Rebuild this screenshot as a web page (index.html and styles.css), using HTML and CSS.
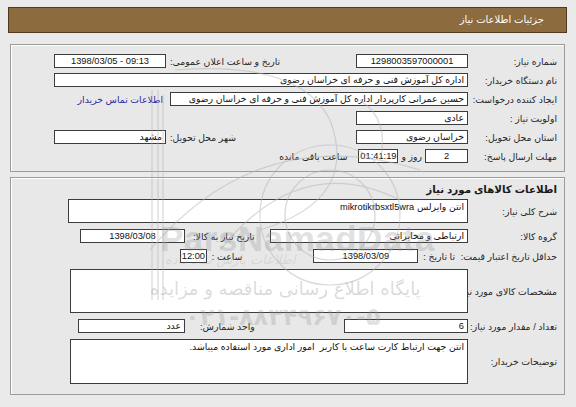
FILE: index.html
```html
<!DOCTYPE html>
<html lang="fa" dir="rtl">
<head>
<meta charset="utf-8">
<title>جزئیات اطلاعات نیاز</title>
<link rel="stylesheet" href="styles.css">
</head>
<body>
<div class="page">
  <div class="header">جزئیات اطلاعات نیاز</div>

  <div class="panel p1">
    <div class="row">
      <div class="lbl">شماره نیاز:</div>
      <div class="box c" style="width:112px">1298003597000001</div>
      <div class="grp">
        <div class="txt">تاریخ و ساعت اعلان عمومی:</div>
        <div class="box c" style="width:112px">1398/03/05 - 09:13</div>
      </div>
    </div>
    <div class="row">
      <div class="lbl">نام دستگاه خریدار:</div>
      <div class="box" style="width:414px">اداره کل آموزش فنی و حرفه ای خراسان رضوی</div>
    </div>
    <div class="row">
      <div class="lbl">ایجاد کننده درخواست:</div>
      <div class="box" style="width:298px">حسین عمرانی کارپردار اداره کل آموزش فنی و حرفه ای خراسان رضوی</div>
      <a class="link" href="#">اطلاعات تماس خریدار</a>
    </div>
    <div class="row">
      <div class="lbl">اولویت نیاز :</div>
      <div class="box" style="width:112px">عادی</div>
    </div>
    <div class="row">
      <div class="lbl">استان محل تحویل:</div>
      <div class="box" style="width:112px">خراسان رضوی</div>
      <div class="grp">
        <div class="txt">شهر محل تحویل:</div>
        <div class="box" style="width:112px">مشهد</div>
      </div>
    </div>
    <div class="row">
      <div class="lbl">مهلت ارسال پاسخ:</div>
      <div class="box c" style="width:43px">2</div>
      <div class="txt gap3">روز و</div>
      <div class="box c gap3" style="width:40px">01:41:19</div>
      <div class="txt gap11">ساعت باقی مانده</div>
    </div>
  </div>

  <div class="panel p2">
    <div class="title">اطلاعات کالاهای مورد نیاز</div>
    <div class="row tall24">
      <div class="lbl">شرح کلی نیاز:</div>
      <div class="box multi" style="width:400px">انتن وایرلس mikrotikrbsxtl5wra</div>
    </div>
    <div class="row">
      <div class="lbl">گروه کالا:</div>
      <div class="box" style="width:198px">ارتباطی و مخابراتی</div>
      <div class="grp ml12">
        <div class="txt">تاریخ نیاز به کالا:</div>
        <div class="box c gap8" style="width:105px">1398/03/08</div>
      </div>
    </div>
    <div class="row">
      <div class="lbl">حداقل تاریخ اعتبار قیمت:</div>
      <div class="txt gap13">تا تاریخ :</div>
      <div class="box c gap5" style="width:105px">1398/03/09</div>
      <div class="txt gap71">ساعت :</div>
      <div class="box c gap5" style="width:27px">12:00</div>
    </div>
    <div class="row tall44">
      <div class="lbl">مشخصات کالای مورد نیاز:</div>
      <div class="box multi" style="width:398px"></div>
    </div>
    <div class="row">
      <div class="lbl">تعداد / مقدار مورد نیاز:</div>
      <div class="box" style="width:124px">6</div>
      <div class="grp ml10">
        <div class="txt">واحد شمارش:</div>
        <div class="box gap15" style="width:107px">عدد</div>
      </div>
    </div>
    <div class="row tall45">
      <div class="lbl">توضیحات خریدار:</div>
      <div class="box multi" style="width:398px">انتن جهت ارتباط کارت ساعت با کاربر&nbsp; امور اداری مورد استفاده میباشد.</div>
    </div>
  </div>

  <div class="watermark" aria-hidden="true">
    <svg class="wm-logo" width="576" height="407" viewBox="0 0 576 407">
      <g fill="none" stroke="#b4b4b4" stroke-width="1.2" opacity="0.5">
        <path d="M152 90 V300"/><path d="M158 90 V300"/>
        <path d="M163 95 V300"/>
        <path d="M175 70 Q300 60 330 120 Q360 200 260 230"/>
        <path d="M220 250 Q300 150 400 200"/>
        <path d="M150 250 Q260 120 420 170"/>
        <circle cx="330" cy="215" r="45"/>
        <circle cx="330" cy="215" r="70"/>
        <path d="M360 100 Q390 120 380 160"/>
      </g>
    </svg>
    <div class="wm-en">ParsNamadData</div>
    <div class="wm-small">اطلاعات پارس نماد داده</div>
    <div class="wm-fa">پایگاه اطلاع رسانی مناقصه و مزایده</div>
    <div class="wm-num">۰۲۱-۸۸۳۴۹۶۷۰-۵</div>
  </div>
</div>
</body>
</html>
```

FILE: styles.css
```css
html, body {
  margin: 0;
  padding: 0;
  background: #eaeaea;
}
body {
  font-family: "Liberation Sans", "DejaVu Sans", sans-serif;
  font-size: 9.3px;
  color: #1a1a1a;
}
.page {
  position: relative;
  width: 576px;
  height: 407px;
  box-sizing: border-box;
  padding: 7px 9px 0 8px;
  overflow: hidden;
}
.header {
  height: 26px;
  box-sizing: border-box;
  background: #8c6b3e;
  border: 1px solid #4e3b22;
  color: #ffffff;
  font-size: 10px;
  line-height: 24px;
  padding-right: 22px;
}
.panel {
  margin: 11px 2px 0 2px;
  border: 1px solid #9b9b9b;
  box-shadow: inset 1px 1px 0 #ffffff;
  background: #e8e8e8;
  display: flex;
  flex-direction: column;
}
.p1 {
  padding: 9px 7px 8px 43px;
  gap: 5px;
}
.p2 {
  margin-top: 5px;
  padding: 4px 7px 10px 57px;
  gap: 6px;
}
.row {
  display: flex;
  align-items: center;
  height: 14px;
}
.tall24 { height: 24px; }
.tall44 { height: 44px; }
.tall45 { height: 45px; }
.lbl {
  width: 89px;
  flex: none;
  white-space: nowrap;
  color: #262626;
}
.txt {
  white-space: nowrap;
  flex: none;
  color: #262626;
}
.box {
  height: 14px;
  box-sizing: border-box;
  flex: none;
  background: #ffffff;
  border: 1px solid #3c3c3c;
  line-height: 12px;
  padding: 0 3px;
  white-space: nowrap;
  overflow: hidden;
  color: #111;
}
.box.c {
  text-align: center;
  direction: ltr;
  padding: 0;
}
.box.multi {
  height: 100%;
  white-space: normal;
  padding-top: 1px;
}
.grp {
  margin-right: auto;
  display: flex;
  align-items: center;
  gap: 4px;
}
.ml12 { margin-left: 12px; gap: 0; }
.ml10 { margin-left: 10px; gap: 0; }
.gap3 { margin-right: 3px; }
.gap5 { margin-right: 5px; }
.gap8 { margin-right: 8px; }
.gap11 { margin-right: 11px; }
.gap13 { margin-right: 13px; }
.gap15 { margin-right: 15px; }
.gap71 { margin-right: 71px; }
.link {
  margin-right: 7px;
  color: #2b2ba3;
  text-decoration: none;
  white-space: nowrap;
}
.title {
  font-weight: bold;
  font-size: 10.3px;
  line-height: 16px;
  margin-bottom: -5px;
  color: #1a1a1a;
}
.watermark {
  position: absolute;
  inset: 0;
  pointer-events: none;
}
.wm-logo {
  position: absolute;
  left: 0;
  top: 0;
}
.wm-en {
  position: absolute;
  left: 160px;
  top: 219px;
  direction: ltr;
  font-family: "Liberation Sans", sans-serif;
  font-weight: bold;
  font-size: 35px;
  letter-spacing: 0.5px;
  color: rgba(150, 150, 150, 0.3);
}
.wm-small {
  position: absolute;
  left: 165px;
  top: 252px;
  font-family: "DejaVu Sans", sans-serif;
  font-size: 13px;
  font-style: italic;
  color: rgba(150, 150, 150, 0.22);
}
.wm-fa {
  position: absolute;
  left: 150px;
  top: 278px;
  font-family: "DejaVu Sans", sans-serif;
  font-size: 18px;
  color: rgba(150, 150, 150, 0.35);
  white-space: nowrap;
}
.wm-num {
  position: absolute;
  left: 185px;
  top: 303px;
  font-family: "DejaVu Sans", sans-serif;
  font-weight: bold;
  font-size: 24px;
  color: rgba(150, 150, 150, 0.3);
  white-space: nowrap;
}
```
